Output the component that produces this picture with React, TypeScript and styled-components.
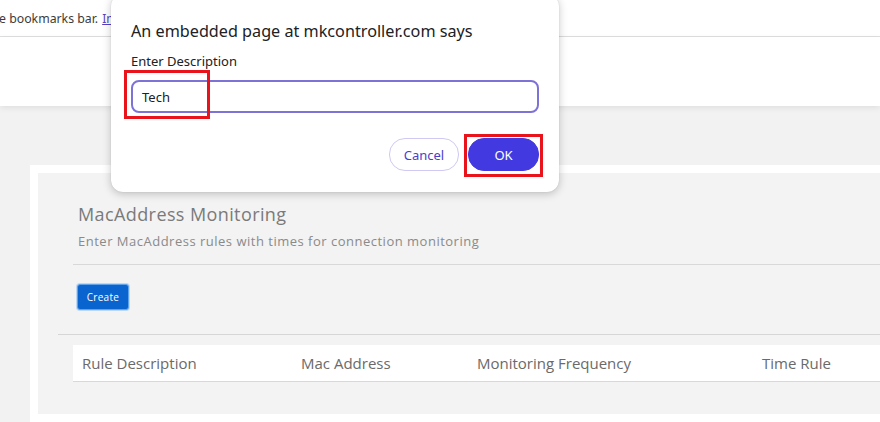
import React from "react";
import styled, { createGlobalStyle } from "styled-components";

const Global = createGlobalStyle`
  html, body { margin: 0; padding: 0; }
  body {
    width: 880px;
    height: 422px;
    overflow: hidden;
    background: #f2f2f2;
    font-family: "Open Sans", "Noto Sans", sans-serif;
  }
  #root { position: relative; width: 880px; height: 422px; }
`;

const Page = styled.div`
  position: relative;
  width: 880px;
  height: 422px;
  display: flex;
  flex-direction: column;
  background: #f2f2f2;
`;

const BookmarksBar = styled.div`
  height: 36px;
  flex: 0 0 auto;
  background: #ffffff;
  border-bottom: 1px solid #dfdfdf;
  display: flex;
  align-items: center;
  font-family: "Noto Sans", "Open Sans", sans-serif;
  font-size: 12.3px;
  color: #3c3c3c;
  white-space: nowrap;
`;

const BarText = styled.span`
  margin-left: -1px;
`;

const BarLink = styled.a`
  color: #5a3fc0;
  text-decoration: underline;
  margin-left: 4px;
`;

const Header = styled.div`
  height: 69px;
  flex: 0 0 auto;
  background: #ffffff;
  box-shadow: 0 2px 6px rgba(0, 0, 0, 0.08);
  position: relative;
  z-index: 1;
`;

const Main = styled.div`
  flex: 1 1 auto;
  padding: 59px 0 0 30px;
  display: flex;
  overflow: hidden;
`;

const Card = styled.div`
  flex: 1 1 auto;
  background: #ffffff;
  padding: 8px 0 8px 8px;
  display: flex;
`;

const Panel = styled.div`
  flex: 1 1 auto;
  background: #f3f3f3;
  padding: 20px 0 0 20px;
  display: flex;
  flex-direction: column;
`;

const Section = styled.div`
  margin-left: 15px;
  display: flex;
  flex-direction: column;
`;

const TitleBlock = styled.div`
  padding: 9px 0 14px 5px;
  border-bottom: 1px solid #d8d8d8;
`;

const Title = styled.h2`
  margin: 0;
  font-size: 18px;
  line-height: 24px;
  font-weight: 400;
  letter-spacing: 0.4px;
  color: #7a7a7a;
`;

const Subtitle = styled.p`
  margin: 6px 0 0;
  font-size: 13px;
  line-height: 18px;
  letter-spacing: 0.5px;
  color: #8a8a8a;
`;

const Toolbar = styled.div`
  padding: 19px 0 24px 4px;
  display: flex;
`;

const CreateButton = styled.button`
  height: 26px;
  width: 52px;
  padding: 0;
  border: 1px solid #5fa3ec;
  border-radius: 3px;
  background: #0a64cf;
  color: #ffffff;
  font-family: "Open Sans", sans-serif;
  font-size: 10px;
  letter-spacing: 0.3px;
  box-shadow: 0 0 0 1px rgba(95, 163, 236, 0.35);
`;

const Divider = styled.div`
  height: 1px;
  background: #d6d6d6;
`;

const Table = styled.div`
  margin: 10px 0 0 15px;
`;

const HeaderRow = styled.div`
  height: 36px;
  background: #ffffff;
  border-bottom: 1px solid #d8d8d8;
  display: grid;
  grid-template-columns: 219px 176px 285px 1fr;
  align-items: center;
`;

const HeadCell = styled.div`
  padding-left: 9px;
  font-size: 15px;
  color: #6a6a6a;
  white-space: nowrap;
`;

const Dialog = styled.div`
  position: absolute;
  left: 111px;
  top: -6px;
  width: 448px;
  box-sizing: border-box;
  padding: 25px 20px 21px;
  background: #ffffff;
  border-radius: 12px;
  box-shadow: 0 2px 8px rgba(0, 0, 0, 0.22), 0 0 1px rgba(0, 0, 0, 0.2);
  font-family: "Noto Sans", "Open Sans", sans-serif;
  z-index: 5;
`;

const DialogTitle = styled.div`
  font-size: 16.2px;
  line-height: 24px;
  color: #202124;
`;

const DialogLabel = styled.div`
  margin-top: 9px;
  font-size: 13px;
  line-height: 18px;
  color: #202124;
`;

const DialogInput = styled.div`
  margin-top: 10px;
  height: 33px;
  box-sizing: border-box;
  border: 2px solid #7d72d6;
  border-radius: 8px;
  padding: 0 9px;
  display: flex;
  align-items: center;
  font-size: 13px;
  color: #202124;
`;

const DialogActions = styled.div`
  margin-top: 25px;
  display: flex;
  justify-content: flex-end;
  gap: 9px;
`;

const DialogButton = styled.button<{ $primary?: boolean }>`
  height: 33px;
  width: ${(p) => (p.$primary ? "71px" : "70px")};
  box-sizing: border-box;
  border-radius: 16px;
  font-family: "Noto Sans", "Open Sans", sans-serif;
  font-size: 13px;
  padding: 0;
  border: 1px solid ${(p) => (p.$primary ? "#4339e0" : "#cfc9f3")};
  background: ${(p) => (p.$primary ? "#4339e0" : "#ffffff")};
  color: ${(p) => (p.$primary ? "#ffffff" : "#4a3fc9")};
`;

const Highlight = styled.div<{ $l: number; $t: number; $w: number; $h: number }>`
  position: absolute;
  left: ${(p) => p.$l}px;
  top: ${(p) => p.$t}px;
  width: ${(p) => p.$w}px;
  height: ${(p) => p.$h}px;
  box-sizing: border-box;
  border: 3px solid #e8131b;
  z-index: 6;
  pointer-events: none;
`;

export default function App() {
  const columns = ["Rule Description", "Mac Address", "Monitoring Frequency", "Time Rule"];
  return (
    <>
      <Global />
      <Page>
        <BookmarksBar>
          <BarText>e bookmarks bar.</BarText>
          <BarLink href="#">Im</BarLink>
        </BookmarksBar>
        <Header />
        <Main>
          <Card>
            <Panel>
              <Section>
                <TitleBlock>
                  <Title>MacAddress Monitoring</Title>
                  <Subtitle>Enter MacAddress rules with times for connection monitoring</Subtitle>
                </TitleBlock>
                <Toolbar>
                  <CreateButton>Create</CreateButton>
                </Toolbar>
              </Section>
              <Divider />
              <Table>
                <HeaderRow>
                  {columns.map((c) => (
                    <HeadCell key={c}>{c}</HeadCell>
                  ))}
                </HeaderRow>
              </Table>
            </Panel>
          </Card>
        </Main>
        <Dialog>
          <DialogTitle>An embedded page at mkcontroller.com says</DialogTitle>
          <DialogLabel>Enter Description</DialogLabel>
          <DialogInput>Tech</DialogInput>
          <DialogActions>
            <DialogButton>Cancel</DialogButton>
            <DialogButton $primary>OK</DialogButton>
          </DialogActions>
        </Dialog>
        <Highlight $l={124} $t={70} $w={86} $h={49} />
        <Highlight $l={464} $t={134} $w={79} $h={43} />
      </Page>
    </>
  );
}
